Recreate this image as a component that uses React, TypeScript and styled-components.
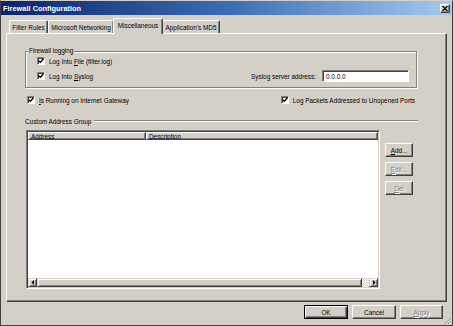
import React from 'react';
import styled, { createGlobalStyle } from 'styled-components';

const GlobalStyle = createGlobalStyle`
  html, body {
    margin: 0;
    padding: 0;
    background: #d4d0c8;
  }
  body {
    font-family: "Liberation Sans", Arial, sans-serif;
  }
`;

const Window = styled.div`
  position: relative;
  box-sizing: border-box;
  width: 453px;
  height: 326px;
  background: #d4d0c8;
  border: 1px solid #404040;
  border-top-color: #d4d0c8;
  display: flex;
  flex-direction: column;
  font-family: "Liberation Sans", Arial, sans-serif;
  font-size: 6.4px;
  color: #000;
  overflow: hidden;
`;

const TitleBar = styled.div`
  flex: none;
  height: 14px;
  display: flex;
  align-items: center;
  justify-content: space-between;
  padding: 0 2px 0 2px;
  background: linear-gradient(90deg, #0a246a 0%, #3b6cb4 50%, #a6caf0 100%);
`;

const Title = styled.span`
  color: #fff;
  font-weight: bold;
  font-size: 7.3px;
  letter-spacing: 0.05px;
`;

const CloseButton = styled.div`
  box-sizing: border-box;
  width: 10px;
  height: 9px;
  background: #d4d0c8;
  border: 1px solid;
  border-color: #fff #404040 #404040 #fff;
  box-shadow: inset -1px -1px 0 #808080;
  display: flex;
  align-items: center;
  justify-content: center;
`;

const TabRow = styled.div`
  flex: none;
  position: relative;
  z-index: 1;
  height: 16px;
  margin-top: 2px;
  padding-left: 8px;
  display: flex;
  align-items: flex-end;
`;

const Tab = styled.div<{ $active?: boolean; $w: number }>`
  box-sizing: border-box;
  position: relative;
  z-index: ${p => (p.$active ? 2 : 1)};
  width: ${p => p.$w}px;
  height: ${p => (p.$active ? 16 : 13)}px;
  margin: ${p => (p.$active ? '0 -1px -1px' : '0')};
  padding-bottom: ${p => (p.$active ? 2 : 0)}px;
  display: flex;
  align-items: center;
  justify-content: center;
  white-space: nowrap;
  background: #d4d0c8;
  border-top: 1px solid #fff;
  border-left: 1px solid #fff;
  border-right: 1px solid #404040;
  box-shadow: inset -1px 0 0 #808080;
  border-radius: 2px 2px 0 0;
`;

const Panel = styled.div`
  flex: none;
  box-sizing: border-box;
  width: 441px;
  height: 269px;
  margin-left: 5px;
  padding: 17px 28px 0 18px;
  display: flex;
  flex-direction: column;
  background: #d4d0c8;
  border-top: 1px solid #fff;
  border-left: 1px solid #fff;
  border-right: 1px solid #404040;
  border-bottom: 1px solid #404040;
  box-shadow: inset -1px -1px 0 #808080;
`;

const GroupBox = styled.div`
  margin-right: 1px;
  padding: 0 7px 5px 11px;
  border: 1px solid #808080;
  box-shadow: 1px 1px 0 #fff, inset 1px 1px 0 #fff;
`;

const GroupTitle = styled.div`
  width: fit-content;
  margin: -5px 0 0 -9px;
  padding: 0 1px;
  line-height: 8px;
  background: #d4d0c8;
`;

const Row = styled.div<{ $h: number; $top: number }>`
  display: flex;
  align-items: center;
  justify-content: space-between;
  height: ${p => p.$h}px;
  margin-top: ${p => p.$top}px;
`;

const CheckLabel = styled.label`
  display: flex;
  align-items: center;
  gap: 4px;
  white-space: nowrap;
`;

const CheckBox = styled.span`
  box-sizing: border-box;
  flex: none;
  width: 8px;
  height: 8px;
  display: flex;
  align-items: center;
  justify-content: center;
  background: #fff;
  border: 1px solid;
  border-color: #808080 #fff #fff #808080;
  box-shadow: inset 1px 1px 0 #404040;
`;

const FieldGroup = styled.div`
  display: flex;
  align-items: center;
  gap: 6px;
`;

const TextField = styled.input`
  box-sizing: border-box;
  width: 87px;
  height: 12px;
  margin: 0;
  padding: 0 0 0 3px;
  font-family: inherit;
  font-size: 6.4px;
  color: #000;
  background: #fff;
  border: 1px solid;
  border-color: #808080 #fff #fff #808080;
  box-shadow: inset 1px 1px 0 #404040;
  outline: none;
`;

const OptionRow = styled(Row)`
  padding: 0 3px 0 2px;
`;

const SectionHeader = styled.div`
  display: flex;
  align-items: center;
  gap: 3px;
  height: 10px;
  margin-top: 11px;
  white-space: nowrap;
`;

const SectionLine = styled.div`
  flex: 1;
  height: 0;
  border-top: 1px solid #808080;
  border-bottom: 1px solid #fff;
`;

const ListArea = styled.div`
  display: flex;
  margin-top: 4px;
`;

const ListView = styled.div`
  box-sizing: border-box;
  width: 354px;
  height: 159px;
  margin-left: 1px;
  padding: 1px;
  display: flex;
  flex-direction: column;
  background: #fff;
  border: 1px solid;
  border-color: #808080 #fff #fff #808080;
  box-shadow: inset 1px 1px 0 #404040, inset -1px -1px 0 #d4d0c8;
`;

const ListHeader = styled.div`
  flex: none;
  display: flex;
  height: 8px;
`;

const HeaderCell = styled.div<{ $w?: number }>`
  box-sizing: border-box;
  ${p => (p.$w ? `width: ${p.$w}px;` : 'flex: 1;')}
  padding-left: 2px;
  display: flex;
  align-items: center;
  background: #d4d0c8;
  border-top: 1px solid #fff;
  border-left: 1px solid #fff;
  border-right: 1px solid #404040;
  border-bottom: 1px solid #404040;
  box-shadow: inset -1px -1px 0 #808080;
`;

const ListBody = styled.div`
  flex: 1;
  background: #fff;
`;

const ScrollBar = styled.div`
  flex: none;
  display: flex;
  height: 9px;
`;

const ScrollButton = styled.div<{ $w?: number }>`
  box-sizing: border-box;
  width: ${p => p.$w ?? 9}px;
  height: 9px;
  display: flex;
  align-items: center;
  justify-content: center;
  background: #d4d0c8;
  border: 1px solid;
  border-color: #d4d0c8 #404040 #404040 #d4d0c8;
  box-shadow: inset 1px 1px 0 #fff, inset -1px -1px 0 #808080;
`;

const ScrollTrack = styled.div`
  flex: 1;
  background: repeating-conic-gradient(#fff 0 25%, #d4d0c8 0 50%) 0 0 / 2px 2px;
`;

const SideButtons = styled.div`
  display: flex;
  flex-direction: column;
  gap: 5px;
  margin-left: 5px;
  padding-top: 13px;
`;

const PushButton = styled.button<{ $w: number; $default?: boolean }>`
  box-sizing: border-box;
  width: ${p => p.$w}px;
  height: 14px;
  margin: 0;
  padding: 0;
  font-family: inherit;
  font-size: 6.4px;
  color: #000;
  background: #d4d0c8;
  border: 1px solid;
  border-color: ${p => (p.$default ? '#000' : '#fff #404040 #404040 #fff')};
  box-shadow: ${p =>
    p.$default
      ? 'inset 1px 1px 0 #fff, inset -1px -1px 0 #404040, inset -2px -2px 0 #808080'
      : 'inset -1px -1px 0 #808080'};

  &:disabled {
    color: #808080;
    text-shadow: 1px 1px 0 #fff;
  }
`;

const Footer = styled.div`
  flex: 1;
  display: flex;
  justify-content: flex-end;
  align-items: flex-start;
  gap: 4px;
  padding: 3px 9px 0 0;
`;

const Grip = styled.svg`
  position: absolute;
  right: 0;
  bottom: 0;
`;

const Check = () => (
  <CheckBox>
    <svg width="6" height="6" viewBox="0 0 6 6">
      <path d="M0.6 2.6 L2.3 4.3 L5.4 1" fill="none" stroke="#000" strokeWidth="1.3" />
    </svg>
  </CheckBox>
);

const Arrow = ({ dir }: { dir: 'left' | 'right' }) => (
  <svg width="4" height="5" viewBox="0 0 4 5">
    <path d={dir === 'left' ? 'M3 0 L0.5 2.5 L3 5 Z' : 'M1 0 L3.5 2.5 L1 5 Z'} fill="#000" />
  </svg>
);

export default function App() {
  return (
    <>
      <GlobalStyle />
      <Window>
        <TitleBar>
          <Title>Firewall Configuration</Title>
          <CloseButton>
            <svg width="6" height="5" viewBox="0 0 6 5">
              <path d="M0.5 0 L5.5 5 M5.5 0 L0.5 5" stroke="#000" strokeWidth="1.2" />
            </svg>
          </CloseButton>
        </TitleBar>

        <TabRow>
          <Tab $w={39}>Filter Rules</Tab>
          <Tab $w={66}>Microsoft Networking</Tab>
          <Tab $w={50} $active>Miscellaneous</Tab>
          <Tab $w={58}>Application's MD5</Tab>
        </TabRow>

        <Panel>
          <GroupBox>
            <GroupTitle>Firewall logging</GroupTitle>
            <Row $h={10} $top={1}>
              <CheckLabel>
                <Check />
                <span>Log Into <u>F</u>ile (filter.log)</span>
              </CheckLabel>
            </Row>
            <Row $h={12} $top={4}>
              <CheckLabel>
                <Check />
                <span>Log Into <u>S</u>yslog</span>
              </CheckLabel>
              <FieldGroup>
                <span>Syslog server address:</span>
                <TextField readOnly value="0.0.0.0" />
              </FieldGroup>
            </Row>
          </GroupBox>

          <OptionRow $h={10} $top={7}>
            <CheckLabel>
              <Check />
              <span><u>I</u>s Running on Internet Gateway</span>
            </CheckLabel>
            <CheckLabel>
              <Check />
              <span>Log Packets Addressed to Unopened Ports</span>
            </CheckLabel>
          </OptionRow>

          <SectionHeader>
            <span>Custom Address Group</span>
            <SectionLine />
          </SectionHeader>

          <ListArea>
            <ListView>
              <ListHeader>
                <HeaderCell $w={118}>Address</HeaderCell>
                <HeaderCell>Description</HeaderCell>
              </ListHeader>
              <ListBody />
              <ScrollBar>
                <ScrollButton><Arrow dir="left" /></ScrollButton>
                <ScrollButton $w={325} />
                <ScrollTrack />
                <ScrollButton><Arrow dir="right" /></ScrollButton>
              </ScrollBar>
            </ListView>
            <SideButtons>
              <PushButton $w={28}><u>A</u>dd...</PushButton>
              <PushButton $w={28} disabled><u>E</u>dit...</PushButton>
              <PushButton $w={28} disabled><u>D</u>el</PushButton>
            </SideButtons>
          </ListArea>
        </Panel>

        <Footer>
          <PushButton $w={44} $default>OK</PushButton>
          <PushButton $w={44}>Cancel</PushButton>
          <PushButton $w={43} disabled><u>A</u>pply</PushButton>
        </Footer>

        <Grip width="8" height="8" viewBox="0 0 8 8">
          <path d="M7 1 L1 7 M7 4 L4 7" stroke="#808080" strokeWidth="1" />
          <path d="M7 2 L2 7 M7 5 L5 7" stroke="#fff" strokeWidth="1" />
        </Grip>
      </Window>
    </>
  );
}
